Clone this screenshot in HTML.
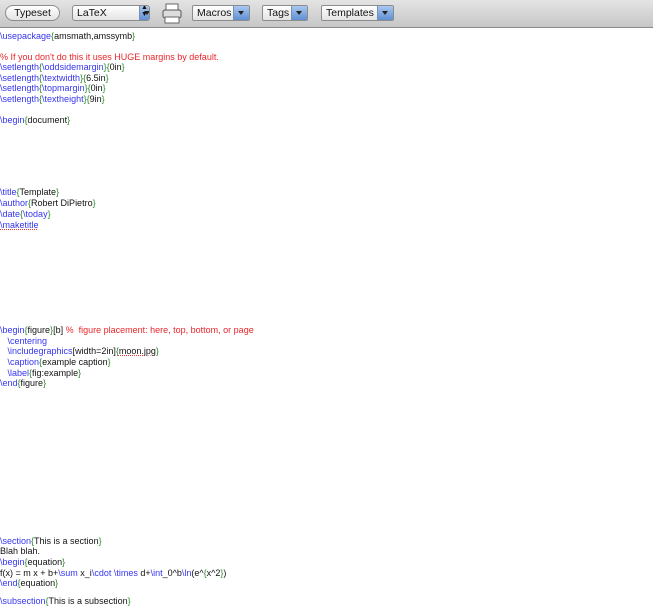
<!DOCTYPE html>
<html><head><style>
body{margin:0;width:653px;height:600px;overflow:hidden;background:#fff;font-family:"Liberation Sans",sans-serif;}
.tb{position:absolute;left:0;top:0;width:653px;height:27px;background:linear-gradient(#e4e4e4,#c6c6c6);border-bottom:1px solid #8a8a8a;}
.btn{position:absolute;top:5px;height:16px;border:1px solid #8c8c8c;background:linear-gradient(#fff,#e3e3e3);font-size:10.5px;line-height:15px;color:#111;box-sizing:border-box;padding-left:4px;overflow:hidden}
.arr{position:absolute;right:0;top:0;width:15px;height:14px;background:linear-gradient(#a9c8ef,#5f8fd3);border-left:1px solid #7a8fb0}
.arr:after{content:"";position:absolute;left:4px;top:5px;border-left:3px solid transparent;border-right:3px solid transparent;border-top:4px solid #222}
.l{position:absolute;left:0;font-size:9px;white-space:pre;line-height:12px;color:#111}
.c{color:#3535f0}.g{color:#2a8a2a}.r{color:#e8262b}
.u{text-decoration:underline dotted #e33}
</style></head><body>
<div class="tb">
<div class="btn" style="left:5px;width:55px;border-radius:9px;text-align:center;padding:0">Typeset</div>
<div class="btn" style="left:72px;width:78px;border-radius:3px">LaTeX<div class="arr" style="width:9px;background:linear-gradient(#a9c8ef,#5f8fd3)"><span style="position:absolute;left:1px;top:-2px;font-size:7px;line-height:7px">▲<br>▼</span></div></div>
<svg style="position:absolute;left:161px;top:3px" width="22" height="22"><rect x="5" y="1" width="12" height="6" fill="#fff" stroke="#666"/><rect x="2" y="7" width="18" height="8" rx="2" fill="#ddd" stroke="#555"/><rect x="4" y="14" width="14" height="6" fill="#fff" stroke="#666"/></svg>
<div class="btn" style="left:192px;width:58px;border-radius:2px">Macros<div class="arr"></div></div>
<div class="btn" style="left:262px;width:46px;border-radius:2px">Tags<div class="arr"></div></div>
<div class="btn" style="left:321px;width:73px;border-radius:2px">Templates<div class="arr"></div></div>
</div>
<div class="l" style="top:30px"><span class="c">\usepackage</span><span class="g">{</span>amsmath,amssymb<span class="g">}</span></div>
<div class="l r" style="top:51px">% If you don't do this it uses HUGE margins by default.</div>
<div class="l" style="top:61px"><span class="c">\setlength</span><span class="g">{</span><span class="c">\oddsidemargin</span><span class="g">}{</span>0in<span class="g">}</span></div>
<div class="l" style="top:72px"><span class="c">\setlength</span><span class="g">{</span><span class="c">\textwidth</span><span class="g">}{</span>6.5in<span class="g">}</span></div>
<div class="l" style="top:82px"><span class="c">\setlength</span><span class="g">{</span><span class="c">\topmargin</span><span class="g">}{</span>0in<span class="g">}</span></div>
<div class="l" style="top:93px"><span class="c">\setlength</span><span class="g">{</span><span class="c">\textheight</span><span class="g">}{</span>9in<span class="g">}</span></div>
<div class="l" style="top:114px"><span class="c">\begin</span><span class="g">{</span>document<span class="g">}</span></div>
<div class="l" style="top:186px"><span class="c">\title</span><span class="g">{</span>Template<span class="g">}</span></div>
<div class="l" style="top:197px"><span class="c">\author</span><span class="g">{</span>Robert DiPietro<span class="g">}</span></div>
<div class="l" style="top:208px"><span class="c">\date</span><span class="g">{</span><span class="c">\today</span><span class="g">}</span></div>
<div class="l" style="top:219px"><span class="c u">\maketitle</span></div>
<div class="l" style="top:324px"><span class="c">\begin</span><span class="g">{</span>figure<span class="g">}</span>[b] <span class="r">%  figure placement: here, top, bottom, or page</span></div>
<div class="l" style="top:335px">   <span class="c">\centering</span></div>
<div class="l" style="top:345px">   <span class="c">\includegraphics</span>[width=2in]<span class="g">{</span><span class="u">moon.jpg</span><span class="g">}</span></div>
<div class="l" style="top:356px">   <span class="c">\caption</span><span class="g">{</span>example caption<span class="g">}</span></div>
<div class="l" style="top:367px">   <span class="c">\label</span><span class="g">{</span>fig:example<span class="g">}</span></div>
<div class="l" style="top:377px"><span class="c">\end</span><span class="g">{</span>figure<span class="g">}</span></div>
<div class="l" style="top:535px"><span class="c">\section</span><span class="g">{</span>This is a section<span class="g">}</span></div>
<div class="l" style="top:545px">Blah blah.</div>
<div class="l" style="top:556px"><span class="c">\begin</span><span class="g">{</span>equation<span class="g">}</span></div>
<div class="l" style="top:567px">f(x) = m x + b+<span class="c">\sum</span> x_i<span class="c">\cdot \times</span> d+<span class="c">\int</span>_0^b<span class="c">\ln</span>(e^<span class="g">{</span>x^2<span class="g">}</span>)</div>
<div class="l" style="top:577px"><span class="c">\end</span><span class="g">{</span>equation<span class="g">}</span></div>
<div class="l" style="top:595px"><span class="c">\subsection</span><span class="g">{</span>This is a subsection<span class="g">}</span></div>
</body></html>
